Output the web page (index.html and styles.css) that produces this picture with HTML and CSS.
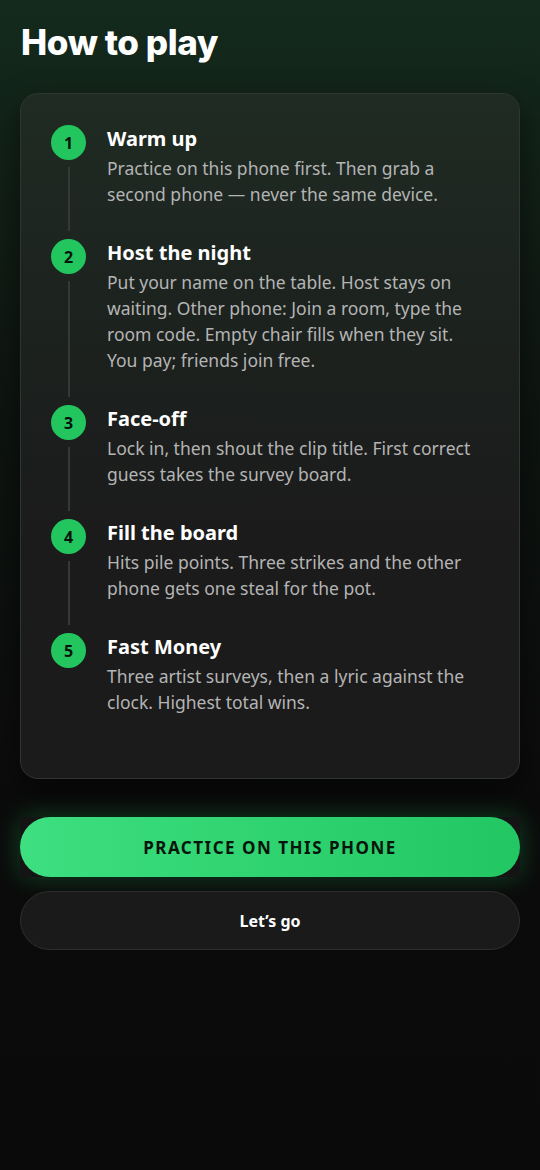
FILE: index.html
```html
<!DOCTYPE html>
<html lang="en">
<head>
<meta charset="UTF-8">
<meta name="viewport" content="width=device-width, initial-scale=1.0">
<title>How to play</title>
<link rel="stylesheet" href="styles.css">
</head>
<body>
    <div class="screen">
        <h1 class="page-title">How to play</h1>

        <!-- Steps card -->
        <div class="card">
            <div class="step">
                <div class="marker">
                    <span class="num">1</span>
                    <span class="line"></span>
                </div>
                <div class="step-body">
                    <h3>Warm up</h3>
                    <p>Practice on this phone first. Then grab a second phone — never the same device.</p>
                </div>
            </div>

            <div class="step">
                <div class="marker">
                    <span class="num">2</span>
                    <span class="line"></span>
                </div>
                <div class="step-body">
                    <h3>Host the night</h3>
                    <p>Put your name on the table. Host stays on waiting. Other phone: Join a room, type the room code. Empty chair fills when they sit. You pay; friends join free.</p>
                </div>
            </div>

            <div class="step">
                <div class="marker">
                    <span class="num">3</span>
                    <span class="line"></span>
                </div>
                <div class="step-body">
                    <h3>Face-off</h3>
                    <p>Lock in, then shout the clip title. First correct guess takes the survey board.</p>
                </div>
            </div>

            <div class="step">
                <div class="marker">
                    <span class="num">4</span>
                    <span class="line"></span>
                </div>
                <div class="step-body">
                    <h3>Fill the board</h3>
                    <p>Hits pile points. Three strikes and the other phone gets one steal for the pot.</p>
                </div>
            </div>

            <div class="step">
                <div class="marker">
                    <span class="num">5</span>
                </div>
                <div class="step-body">
                    <h3>Fast Money</h3>
                    <p>Three artist surveys, then a lyric against the clock. Highest total wins.</p>
                </div>
            </div>
        </div>

        <!-- Actions -->
        <div class="actions">
            <div class="btn-wrap">
                <button class="btn-primary">PRACTICE ON THIS PHONE</button>
            </div>
            <button class="btn-secondary">Let’s go</button>
        </div>
    </div>
</body>
</html>
```

FILE: styles.css
```css
html, body {
    margin: 0;
    padding: 0;
    height: 100%;
}

body {
    font-family: "Noto Sans", "Open Sans", sans-serif;
    color: #fff;
    background: linear-gradient(180deg, #142a1d 0, #112017 180px, #0e1410 420px, #0b0b0b 800px, #0a0a0a 100%);
    min-height: 1170px;
}

.screen {
    padding: 21px 20px 40px;
}

.page-title {
    font-family: Inter, "Noto Sans", sans-serif;
    font-size: 35px;
    font-weight: 800;
    letter-spacing: -0.4px;
    line-height: 42px;
    margin: 0 0 30px 1px;
}

.card {
    border-radius: 18px;
    border: 1px solid #2f3531;
    background: linear-gradient(180deg, #1f2b23 0, #1c211e 260px, #1b1b1b 450px, #1b1b1b 100%);
    box-shadow: 0 12px 30px rgba(0, 0, 0, 0.5);
    padding: 31px 40px 31px 30px;
}

.step {
    display: flex;
    gap: 21px;
    padding-bottom: 32px;
}

.marker {
    width: 35px;
    flex-shrink: 0;
    display: flex;
    flex-direction: column;
    align-items: center;
}

.num {
    width: 35px;
    height: 35px;
    border-radius: 50%;
    background: #22c55e;
    color: #07140c;
    font-size: 16px;
    font-weight: 700;
    display: flex;
    align-items: center;
    justify-content: center;
}

.line {
    flex: 1;
    width: 2px;
    background: #343836;
    margin: 7px 0 -24px;
}

.step-body {
    flex: 1;
}

.step-body h3 {
    font-size: 20px;
    font-weight: 700;
    line-height: 28px;
    margin: 0 0 2px;
    color: #fff;
}

.step-body p {
    font-size: 17.5px;
    line-height: 26px;
    margin: 0;
    color: #b4b4b4;
}

.actions {
    margin-top: 38px;
    display: flex;
    flex-direction: column;
    gap: 14px;
}

.btn-wrap {
    background: #141414;
    box-shadow: 0 0 26px rgba(34, 197, 94, 0.3);
}

.btn-primary {
    display: block;
    width: 100%;
    height: 60px;
    border: none;
    border-radius: 30px;
    background: linear-gradient(90deg, #3ddf80 0, #2fd36f 50%, #22c763 100%);
    color: #07140c;
    font-family: "Noto Sans", sans-serif;
    font-size: 17px;
    font-weight: 700;
    letter-spacing: 1.5px;
    cursor: pointer;
}

.btn-secondary {
    display: block;
    width: 100%;
    height: 59px;
    border: 1px solid #2e2e2e;
    border-radius: 30px;
    background: #1a1a1a;
    color: #fff;
    font-family: "Noto Sans", sans-serif;
    font-size: 16px;
    font-weight: 700;
    cursor: pointer;
}
```
